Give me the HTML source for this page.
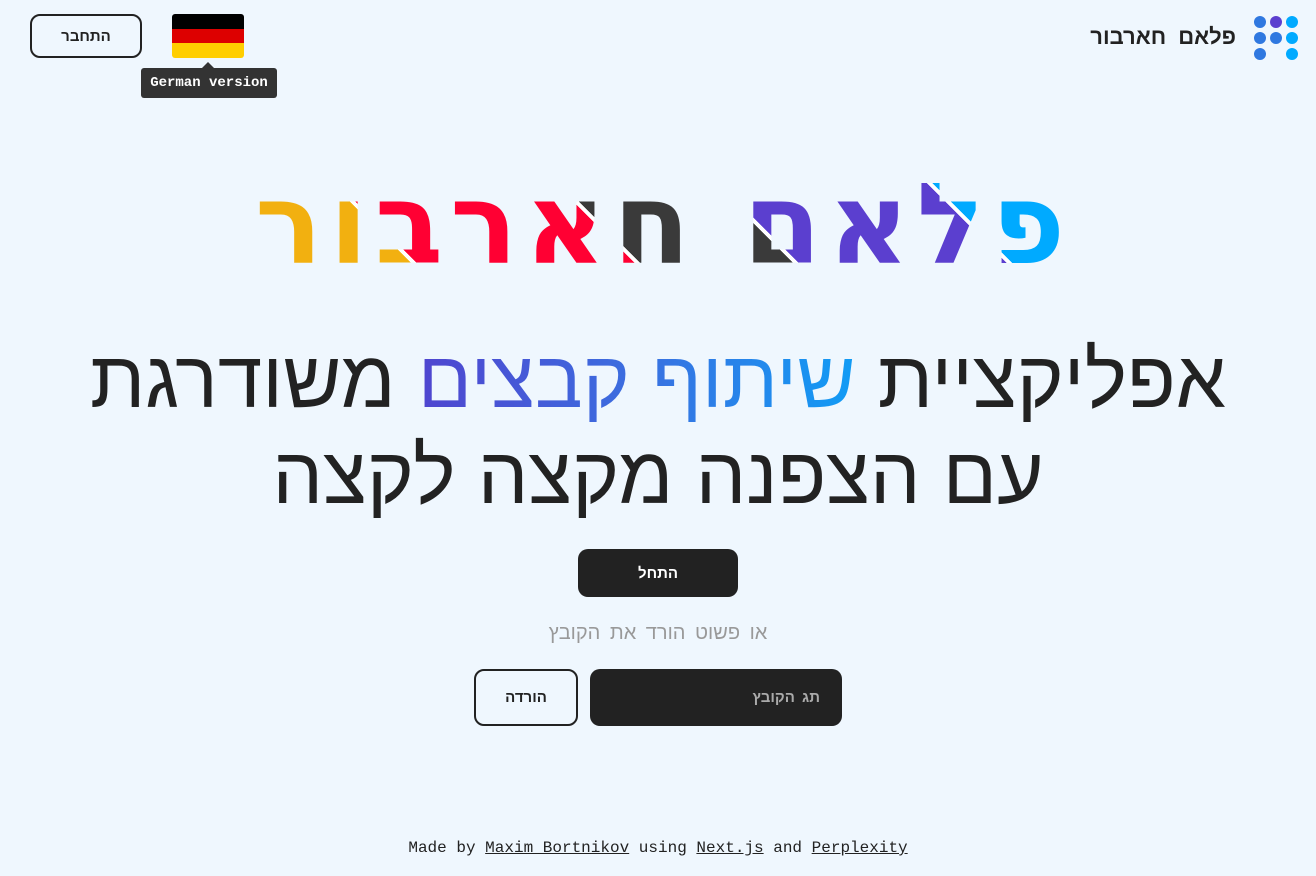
<!DOCTYPE html>
<html><head><meta charset="utf-8"><style>
*{margin:0;padding:0;box-sizing:border-box}
body{width:1316px;height:876px;background:#eff7fe;font-family:"Liberation Sans","DejaVu Sans",sans-serif;position:relative;overflow:hidden;color:#222}
.abs{position:absolute}
.dot{position:absolute;width:12px;height:12px;border-radius:50%}
.btn{position:absolute;border:2px solid #222;border-radius:10px;display:flex;align-items:center;justify-content:center;font-weight:bold;font-size:15px;direction:rtl}
h1{position:absolute;left:140px;top:160px;width:1040px;height:140px;text-align:center;direction:rtl;font-family:"DejaVu Sans",sans-serif;font-size:112px;font-weight:bold;line-height:130px;white-space:nowrap;letter-spacing:7px;text-indent:-7px;
background:linear-gradient(45deg,#f2b010 0 218px,#fff 218px 222px,#ff0033 222px 376px,#fff 376px 380px,#3a3a3a 380px 488px,#fff 488px 492px,#5b3fcf 492px 639px,#fff 639px 643px,#00aaff 643px);-webkit-background-clip:text;background-clip:text;color:transparent}
.l{position:absolute;left:0;width:1316px;text-align:center;direction:rtl;font-size:80px;white-space:nowrap;color:#222}
.g{background:linear-gradient(to left,#119cf5,#3b6fe0,#4f45cf);-webkit-background-clip:text;background-clip:text;color:transparent}
.mono{font-family:"Liberation Mono","DejaVu Sans Mono",monospace}
</style></head><body>
<div class="dot" style="left:1254px;top:16px;background:#2f78e0"></div>
<div class="dot" style="left:1270px;top:16px;background:#5b3fcf"></div>
<div class="dot" style="left:1286px;top:16px;background:#00aaff"></div>
<div class="dot" style="left:1254px;top:32px;background:#2f78e0"></div>
<div class="dot" style="left:1270px;top:32px;background:#2f78e0"></div>
<div class="dot" style="left:1286px;top:32px;background:#00aaff"></div>
<div class="dot" style="left:1254px;top:48px;background:#2f78e0"></div>
<div class="dot" style="left:1286px;top:48px;background:#00aaff"></div>
<div class="abs" style="right:80px;top:24px;font-size:22px;font-weight:bold;direction:rtl;white-space:nowrap;word-spacing:6px">פלאם חארבור</div>

<div class="btn" style="left:30px;top:14px;width:112px;height:44px">התחבר</div>
<div class="abs" style="left:172px;top:14px;width:72px;height:44px;border-radius:3px;overflow:hidden">
<div style="height:14.7px;background:#000"></div><div style="height:14.7px;background:#dd0000"></div><div style="height:14.6px;background:#ffce00"></div></div>
<div class="abs" style="left:202px;top:62px;width:0;height:0;border-left:6px solid transparent;border-right:6px solid transparent;border-bottom:6px solid #333"></div>
<div class="abs mono" style="left:141px;top:68px;width:136px;height:30px;background:#333;border-radius:3px;color:#fff;font-size:14px;line-height:30px;text-align:center;font-weight:bold">German version</div>

<h1>פלאם חארבור</h1>

<div class="l" style="top:334px;line-height:92px">אפליקציית <span class="g">שיתוף קבצים</span> משודרגת</div>
<div class="l" style="top:430px;line-height:92px">עם הצפנה מקצה לקצה</div>

<div class="btn" style="left:578px;top:549px;width:160px;height:48px;background:#222;color:#fff;border:none">התחל</div>
<div class="abs" style="left:0;width:1316px;top:622px;text-align:center;direction:rtl;font-size:20px;color:#999;word-spacing:4px">או פשוט הורד את הקובץ</div>
<div class="abs" style="left:590px;top:669px;width:252px;height:57px;background:#222;border-radius:10px;direction:rtl;color:#aaa;font-weight:bold;font-size:15px;line-height:57px;padding-right:22px;word-spacing:3px">תג הקובץ</div>
<div class="btn" style="left:474px;top:669px;width:104px;height:57px">הורדה</div>

<div class="abs mono" style="left:0;width:1316px;top:839px;text-align:center;font-size:16px;color:#222">Made by <u>Maxim Bortnikov</u> using <u>Next.js</u> and <u>Perplexity</u></div>
</body></html>
